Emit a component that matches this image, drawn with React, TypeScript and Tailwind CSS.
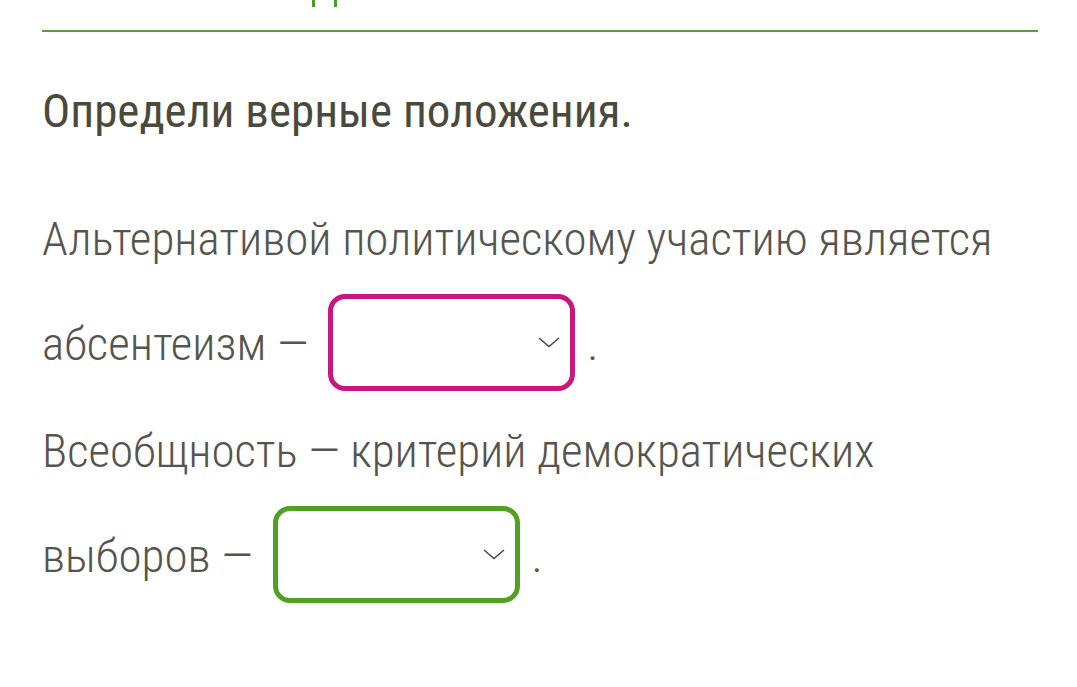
import React from "react";

const body = { fontFamily: '"Roboto Condensed", Roboto, sans-serif' } as React.CSSProperties;

function Chevron() {
  return (
    <svg width="22" height="11" viewBox="0 0 22 11" fill="none" className="block">
      <path d="M1 1 L11 9.5 L21 1" stroke="#464644" strokeWidth="1.5" />
    </svg>
  );
}

function Dropdown({ color }: { color: string }) {
  return (
    <span
      className={`relative -top-[5px] ml-[20px] inline-flex items-center justify-end w-[247px] h-[97px] rounded-[17px] border-[5px] bg-white pr-[10px] align-middle ${color}`}
    >
      <Chevron />
    </span>
  );
}

export default function App() {
  return (
    <div className="w-[1077px] h-[687px] bg-white overflow-hidden" style={body}>
      <div className="pl-[42px] pr-[39px]">
        {/* bottom strokes of the tab caption above the rule */}
        <div className="h-[30px] flex items-start gap-[19px] pl-[270px]">
          <span className="w-[3px] h-[7px] bg-[#4f9a28]" />
          <span className="w-[3px] h-[7px] bg-[#4f9a28]" />
        </div>
        <div className="h-[2px] bg-[#5b9e34]" />
        <h1 className="mt-[53px] text-[47px] leading-[52px] font-normal text-[#4a4a3c]">
          Определи верные положения.
        </h1>
        <div className="mt-[49px] text-[47px] font-light text-[#555550] leading-[105px]">
          Альтернативой политическому участию является абсентеизм —
          <Dropdown color="border-[#c8177f]" />
          <span className="ml-[12px]">.</span>
        </div>
        <div className="mt-[2px] text-[47px] font-light text-[#555550] leading-[105px]">
          Всеобщность — критерий демократических выборов —
          <Dropdown color="border-[#4fa11f]" />
          <span className="ml-[12px]">.</span>
        </div>
      </div>
    </div>
  );
}
